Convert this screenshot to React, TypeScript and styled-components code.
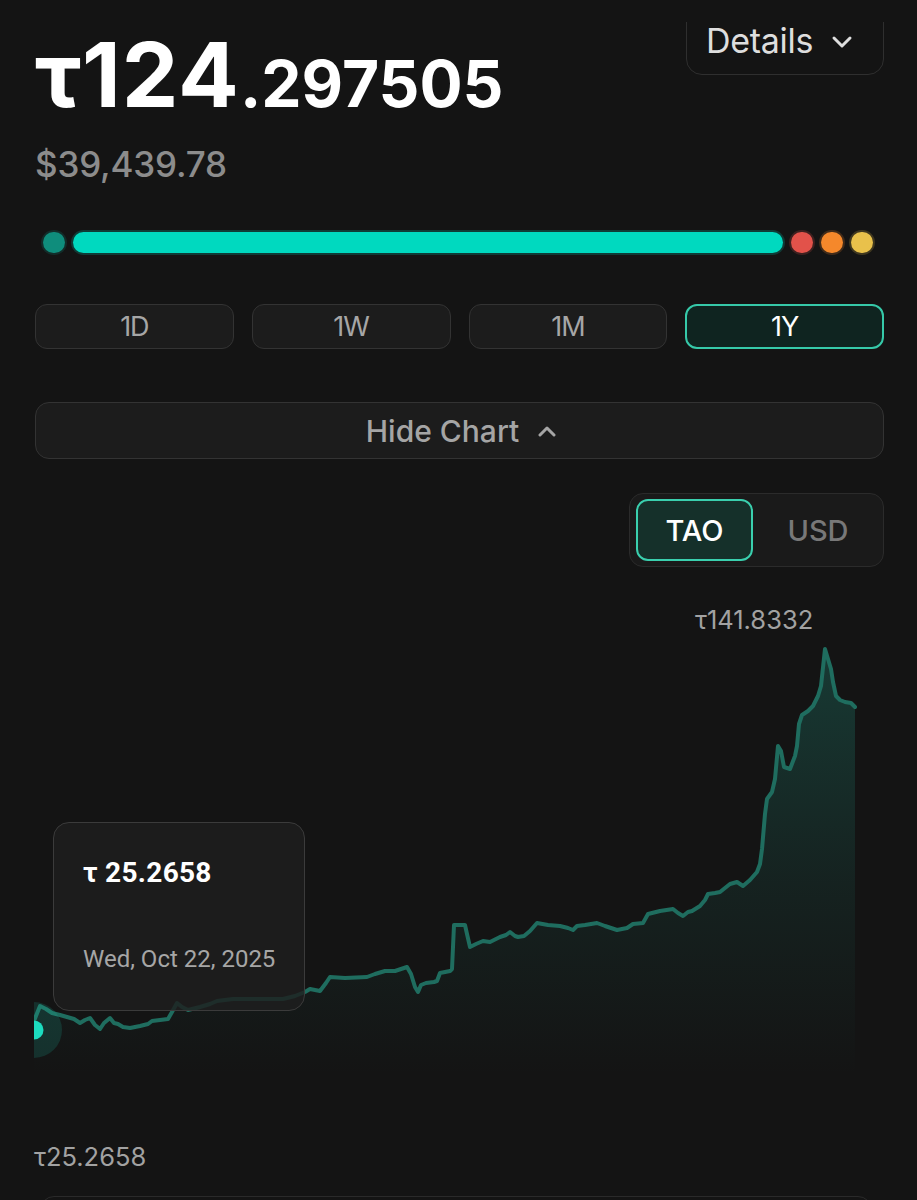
import styled, { createGlobalStyle } from "styled-components";

const GlobalStyle = createGlobalStyle`
  html, body {
    margin: 0;
    padding: 0;
    background: #141414;
  }
  body {
    font-family: Inter, "Noto Sans", "Liberation Sans", sans-serif;
    color: #fff;
    overflow: hidden;
  }
`;

const Page = styled.div`
  width: 917px;
  box-sizing: border-box;
  padding: 0 33px 0 34px;
  display: flex;
  flex-direction: column;
`;

const TopShade = styled.div`
  position: fixed;
  top: 0;
  left: 0;
  right: 0;
  height: 22px;
  background: #141414;
  z-index: 5;
`;

const HeaderRow = styled.div`
  display: flex;
  justify-content: space-between;
  align-items: flex-start;
`;

const PriceBlock = styled.div`
  padding-top: 30px;
  display: flex;
  flex-direction: column;
`;

const PriceLine = styled.div`
  display: flex;
  align-items: baseline;
  font-weight: 700;
  line-height: 1;
  padding-left: 1px;
`;

const PriceMain = styled.span`
  font-size: 90px;
  letter-spacing: 1px;
`;

const PriceFraction = styled.span`
  font-size: 64px;
  letter-spacing: 0;
`;

const FiatValue = styled.div`
  margin-top: 27px;
  font-size: 35px;
  line-height: 1;
  font-weight: 500;
  color: #8c8c8c;
  letter-spacing: -0.2px;
  padding-left: 1px;
`;

const DetailsButton = styled.button`
  margin-top: -30px;
  height: 105px;
  width: 198px;
  box-sizing: border-box;
  display: flex;
  align-items: flex-end;
  gap: 18px;
  padding: 0 0 16px 19px;
  background: #141414;
  border: 1.5px solid #2f2f2f;
  border-radius: 16px;
  color: #dedede;
  font-family: inherit;
  font-size: 34px;
  line-height: 1;
  font-weight: 400;
  letter-spacing: -0.3px;
`;

const Chevron = styled.svg<{ $tone: string }>`
  flex: none;
  stroke: ${(p) => p.$tone};
  fill: none;
  stroke-linecap: round;
  stroke-linejoin: round;
`;

const DetailsChevron = styled(Chevron)`
  margin-bottom: 9px;
`;

const Progress = styled.div`
  margin: 50px 11px 0 9px;
  height: 21px;
  display: flex;
  gap: 8px;
`;

const Segment = styled.div<{ $color: string; $grow?: boolean }>`
  flex: ${(p) => (p.$grow ? "1" : "0 0 22px")};
  height: 21px;
  border-radius: 11px;
  background: ${(p) => p.$color};
  box-shadow: 0 0 0 2px ${(p) => p.$color}33;
`;

const RangeRow = styled.div`
  margin-top: 51px;
  display: grid;
  grid-template-columns: repeat(4, 1fr);
  gap: 18px;
  padding-left: 1px;
`;

const RangeButton = styled.button<{ $active?: boolean }>`
  height: 45px;
  box-sizing: border-box;
  border-radius: 12px;
  border: ${(p) => (p.$active ? "2px solid #36c9a9" : "1.5px solid #333")};
  background: ${(p) => (p.$active ? "#0f2420" : "#1c1c1c")};
  color: ${(p) => (p.$active ? "#fff" : "#a6a6a6")};
  font-family: inherit;
  font-size: 27px;
  font-weight: 400;
  letter-spacing: -1px;
  display: flex;
  align-items: center;
  justify-content: center;
  padding: 0;
`;

const HideChartButton = styled.button`
  margin-top: 53px;
  margin-left: 1px;
  height: 57px;
  box-sizing: border-box;
  border: 1.5px solid #333;
  border-radius: 14px;
  background: #1c1c1c;
  color: #a5a5a5;
  font-family: inherit;
  font-size: 30px;
  font-weight: 500;
  letter-spacing: 0;
  display: flex;
  align-items: center;
  justify-content: center;
  gap: 18px;
  padding: 0 0 0 4px;
`;

const ToggleRow = styled.div`
  margin-top: 34px;
  display: flex;
  justify-content: flex-end;
`;

const Toggle = styled.div`
  height: 74px;
  width: 255px;
  box-sizing: border-box;
  padding: 5px 6px;
  background: #1a1a1a;
  border: 1px solid #2b2b2b;
  border-radius: 14px;
  display: grid;
  grid-template-columns: 117px 1fr;
  gap: 6px;
`;

const ToggleOption = styled.div<{ $active?: boolean }>`
  box-sizing: border-box;
  border-radius: 12px;
  border: ${(p) => (p.$active ? "2px solid #3acfae" : "2px solid transparent")};
  background: ${(p) => (p.$active ? "#15302a" : "transparent")};
  color: ${(p) => (p.$active ? "#fff" : "#787878")};
  font-size: 29px;
  font-weight: 500;
  letter-spacing: 0;
  display: flex;
  align-items: center;
  justify-content: center;
`;

const ChartArea = styled.div`
  position: relative;
  height: 629px;
`;

const ChartSvg = styled.svg`
  display: block;
  width: 850px;
  height: 629px;
`;

const AxisLabel = styled.div<{ $left: number; $top: number }>`
  position: absolute;
  left: ${(p) => p.$left}px;
  top: ${(p) => p.$top}px;
  font-size: 25.5px;
  line-height: 26px;
  color: #a2a2a2;
  letter-spacing: 0;
  white-space: nowrap;
`;

const Tooltip = styled.div`
  position: absolute;
  left: 19px;
  top: 255px;
  width: 252px;
  height: 189px;
  box-sizing: border-box;
  padding: 36px 0 0 29px;
  border: 1.5px solid #3b3b3b;
  border-radius: 16px;
  background: rgba(30, 30, 30, 0.82);
  font-family: Roboto, "Noto Sans", sans-serif;
  display: flex;
  flex-direction: column;
`;

const TooltipValue = styled.div`
  font-size: 28px;
  line-height: 28px;
  font-weight: 700;
  color: #fff;
  letter-spacing: 0.3px;
`;

const TooltipDate = styled.div`
  margin-top: 60px;
  font-size: 24px;
  line-height: 24px;
  color: #a6a6a6;
`;

const NextCard = styled.div`
  height: 80px;
  margin: 0 12px 0 6px;
  border: 1px solid #2a2a2a;
  border-radius: 14px;
`;

const points: [number, number][] = [
  [34, 1022], [40, 1007], [46, 1010], [52, 1014], [60, 1016], [67, 1018], [74, 1020],
  [80, 1024], [85, 1021], [90, 1019], [95, 1026], [100, 1030], [104, 1024], [110, 1019],
  [114, 1024], [118, 1025], [123, 1028], [130, 1029], [140, 1027], [148, 1025], [152, 1022],
  [160, 1021], [168, 1020], [172, 1013], [177, 1004], [182, 1008], [188, 1011], [200, 1008],
  [210, 1005], [217, 1002], [233, 1000], [250, 1000], [267, 1000], [283, 1000], [295, 997],
  [305, 993], [310, 990], [320, 992], [326, 984], [330, 978], [345, 979], [367, 978],
  [375, 975], [385, 972], [395, 972], [407, 968], [411, 975], [415, 988], [418, 993],
  [421, 986], [426, 984], [434, 983], [437, 982], [440, 974], [450, 972], [452, 970],
  [454, 926], [465, 926], [467, 935], [470, 948], [476, 945], [483, 942], [490, 943],
  [494, 941], [500, 938], [506, 936], [510, 933], [515, 937], [518, 938], [524, 937],
  [530, 932], [537, 924], [548, 926], [560, 927], [568, 929], [573, 931], [577, 927],
  [585, 926], [597, 924], [605, 927], [617, 931], [627, 929], [633, 925], [643, 924],
  [648, 915], [660, 912], [673, 910], [678, 914], [683, 917], [688, 913], [692, 912],
  [700, 907], [705, 901], [708, 895], [715, 894], [720, 893], [725, 889], [730, 885],
  [737, 883], [743, 887], [750, 881], [757, 873], [760, 865], [762, 850], [765, 815],
  [767, 800], [772, 793], [775, 780], [778, 747], [781, 752], [784, 768], [790, 770],
  [795, 757], [797, 747], [799, 725], [802, 716], [808, 712], [813, 707], [818, 697],
  [821, 687], [825, 650], [828, 660], [831, 670], [833, 683], [836, 697], [840, 701],
  [845, 703], [851, 704], [855, 708],
];

const linePath = points.map(([x, y], i) => `${i ? "L" : "M"}${x} ${y}`).join(" ");
const areaPath = `${linePath} L855 1075 L34 1075 Z`;

function PriceChart() {
  return (
    <ChartArea>
      <ChartSvg viewBox="34 568 850 629">
        <defs>
          <linearGradient id="area" gradientUnits="userSpaceOnUse" x1="0" y1="650" x2="0" y2="1075">
            <stop offset="0" stopColor="#1f8a78" stopOpacity="0.32" />
            <stop offset="0.55" stopColor="#1f8a78" stopOpacity="0.12" />
            <stop offset="1" stopColor="#1f8a78" stopOpacity="0" />
          </linearGradient>
        </defs>
        <path d={areaPath} fill="url(#area)" />
        <path d={linePath} fill="none" stroke="#1f6d5f" strokeWidth="4" strokeLinejoin="round" strokeLinecap="round" />
        <circle cx="34" cy="1031" r="28" fill="#1fc9ad" fillOpacity="0.16" />
        <circle cx="34" cy="1031" r="9.5" fill="#1cdcbf" />
      </ChartSvg>
      <AxisLabel $left={661} $top={40}>τ141.8332</AxisLabel>
      <AxisLabel $left={0} $top={577}>τ25.2658</AxisLabel>
      <Tooltip>
        <TooltipValue>τ 25.2658</TooltipValue>
        <TooltipDate>Wed, Oct 22, 2025</TooltipDate>
      </Tooltip>
    </ChartArea>
  );
}

export default function App() {
  const ranges = ["1D", "1W", "1M", "1Y"];
  return (
    <>
      <GlobalStyle />
      <TopShade />
      <Page>
        <HeaderRow>
          <PriceBlock>
            <PriceLine>
              <PriceMain>τ124</PriceMain>
              <PriceFraction>.297505</PriceFraction>
            </PriceLine>
            <FiatValue>$39,439.78</FiatValue>
          </PriceBlock>
          <DetailsButton>
            Details
            <DetailsChevron $tone="#dedede" width="22" height="14" viewBox="0 0 22 14" strokeWidth="3">
              <polyline points="3,3 11,11 19,3" />
            </DetailsChevron>
          </DetailsButton>
        </HeaderRow>

        <Progress>
          <Segment $color="#0f8d7c" />
          <Segment $color="#00d9bf" $grow />
          <Segment $color="#e2524a" />
          <Segment $color="#f5882b" />
          <Segment $color="#e9c14b" />
        </Progress>

        <RangeRow>
          {ranges.map((r) => (
            <RangeButton key={r} $active={r === "1Y"}>
              {r}
            </RangeButton>
          ))}
        </RangeRow>

        <HideChartButton>
          Hide Chart
          <Chevron $tone="#a5a5a5" width="20" height="12" viewBox="0 0 20 12" strokeWidth="3">
            <polyline points="3,10 10,3 17,10" />
          </Chevron>
        </HideChartButton>

        <ToggleRow>
          <Toggle>
            <ToggleOption $active>TAO</ToggleOption>
            <ToggleOption>USD</ToggleOption>
          </Toggle>
        </ToggleRow>

        <PriceChart />
        <NextCard />
      </Page>
    </>
  );
}
